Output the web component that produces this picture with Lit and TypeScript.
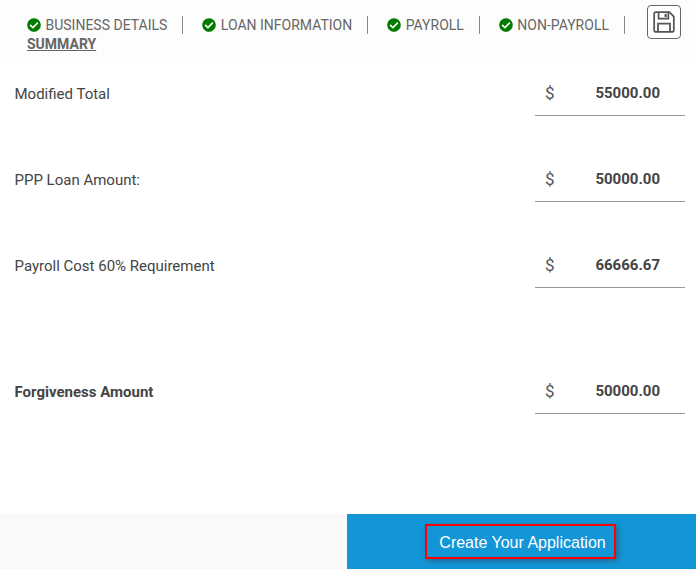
import { LitElement, html, css, svg } from "lit";
import { customElement } from "lit/decorators.js";

const check = svg`<path fill="#007a00" d="M504 256c0 136.967-111.033 248-248 248S8 392.967 8 256 119.033 8 256 8s248 111.033 248 248zM227.314 387.314l184-184c6.248-6.248 6.248-16.379 0-22.627l-22.627-22.627c-6.248-6.249-16.379-6.249-22.628 0L216 308.118l-70.059-70.059c-6.248-6.248-16.379-6.248-22.628 0l-22.627 22.627c-6.248 6.248-6.248 16.379 0 22.627l104 104c6.249 6.25 16.379 6.25 22.628.001z"/>`;

@customElement("app-root")
export class AppRoot extends LitElement {
  static styles = css`
    :host { display: flex; flex-direction: column; height: 569px; width: 696px; overflow: hidden; background: #fff; font-family: Roboto, sans-serif; color: #444; font-size: 15px; }
    .top { display: flex; align-items: flex-start; height: 62px; background: #fdfdfd; box-sizing: border-box; padding: 5px 15px 0 27px; }
    .steps { display: flex; flex-wrap: wrap; width: 620px; padding-top: 11px; }
    .step { display: flex; align-items: center; gap: 4.5px; height: 18px; padding-right: 15px; margin-right: 19px; border-right: 1px solid #888; font-size: 14px; color: #666; line-height: 18px; }
    .step svg { width: 14px; height: 14px; }
    .step:nth-child(4) { margin-right: 0; }
    .current { flex-basis: 100%; font-size: 14px; line-height: 20px; font-weight: 700; color: #666; text-decoration: underline; }
    .save { width: 34px; height: 34px; box-sizing: border-box; border: 1px solid #666; border-radius: 4px; background: #fff; display: flex; align-items: center; justify-content: center; padding: 0; }
    .save svg { width: 24px; height: 24px; }
    .rows { display: flex; flex-direction: column; padding: 0 11px 0 14.5px; }
    .row { display: flex; align-items: center; justify-content: space-between; height: 54px; margin-bottom: 32px; }
    .row.spaced { margin-top: 40px; }
    .label { padding-top: 10px; }
    .b { font-weight: 700; }
    .val { width: 150px; height: 54px; box-sizing: border-box; border-bottom: 1px solid #999; display: flex; align-items: center; justify-content: space-between; padding: 9px 25px 0 10px; }
    .cur { font-size: 17px; color: #555; font-weight: 400; }
    .amt { font-weight: 700; font-size: 15px; color: #444; }
    .foot { margin-top: auto; display: flex; height: 55px; }
    .fl { width: 347px; background: #f9f9f9; }
    .fr { flex: 1; background: #1296d8; display: flex; align-items: center; justify-content: center; }
    .cta { font-family: "Liberation Sans", Arial, sans-serif; font-size: 16px; color: #fff; background: transparent; border: 2px solid #f00; width: 191px; height: 35px; box-sizing: border-box; padding: 2px 0 0 4px; box-shadow: 2px 2px 5px rgba(60, 60, 80, .55); margin-right: 2px; }
  `;

  private step(t: string) {
    return html`<div class="step"><svg viewBox="0 0 512 512">${check}</svg><span>${t}</span></div>`;
  }

  private row(label: string, amt: string, cls = "", lcls = "") {
    return html`<div class="row ${cls}"><span class="label ${lcls}">${label}</span><div class="val"><span class="cur">$</span><span class="amt">${amt}</span></div></div>`;
  }

  render() {
    return html`
      <div class="top">
        <div class="steps">
          ${this.step("BUSINESS DETAILS")}
          ${this.step("LOAN INFORMATION")}
          ${this.step("PAYROLL")}
          ${this.step("NON-PAYROLL")}
          <div class="current">SUMMARY</div>
        </div>
        <button class="save" aria-label="Save">
          <svg viewBox="0 0 22 22" fill="none" stroke="#555" stroke-width="1.6">
            <path d="M2 3.5A1.5 1.5 0 0 1 3.500 2H16l4 4v12.500a1.500 1.500 0 0 1-1.500 1.500h-15A1.500 1.500 0 0 1 2 18.500z"/>
            <path d="M6 2v6h9V2"/>
            <path d="M5.500 20v-7.500h11V20"/>
            <path d="M11.500 3.500h2v3h-2z" fill="#555" stroke="none"/>
          </svg>
        </button>
      </div>
      <div class="rows">
        ${this.row("Modified Total", "55000.00")}
        ${this.row("PPP Loan Amount:", "50000.00")}
        ${this.row("Payroll Cost 60% Requirement", "66666.67")}
        ${this.row("Forgiveness Amount", "50000.00", "spaced", "b")}
      </div>
      <div class="foot">
        <div class="fl"></div>
        <div class="fr"><button class="cta">Create Your Application</button></div>
      </div>
    `;
  }
}
